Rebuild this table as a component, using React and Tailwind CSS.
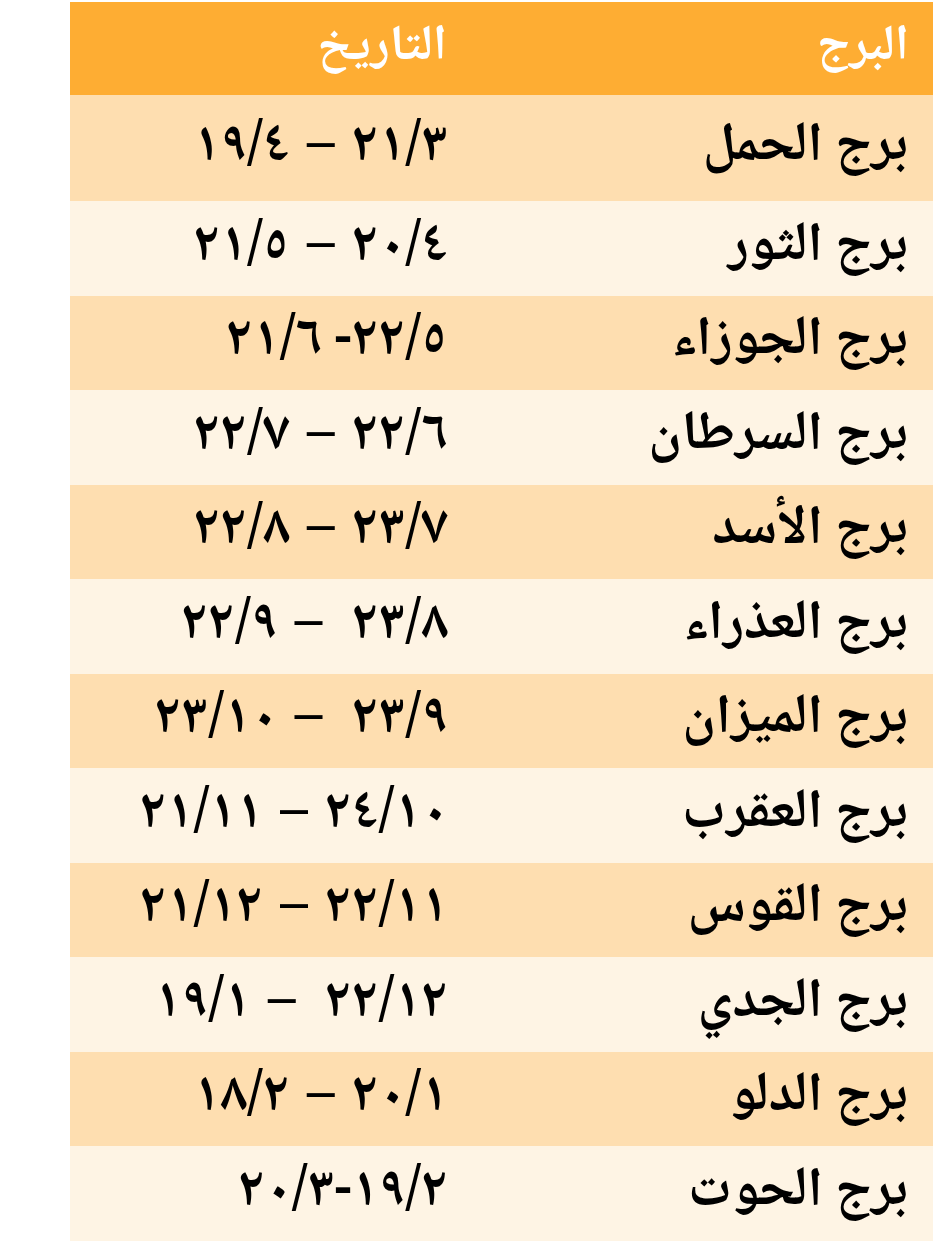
import React from "react";

// [اسم البرج, بداية, فاصل, نهاية]
const rows = [
  ["برج الحمل", "٢١/٣", " – ", "١٩/٤"],
  ["برج الثور", "٢٠/٤", " – ", "٢١/٥"],
  ["برج الجوزاء", "٢٢/٥", "- ", "٢١/٦"],
  ["برج السرطان", "٢٢/٦", " – ", "٢٢/٧"],
  ["برج الأسد", "٢٣/٧", " – ", "٢٢/٨"],
  ["برج العذراء", "٢٣/٨", "  – ", "٢٢/٩"],
  ["برج الميزان", "٢٣/٩", "  – ", "٢٣/١٠"],
  ["برج العقرب", "٢٤/١٠", " – ", "٢١/١١"],
  ["برج القوس", "٢٢/١١", " – ", "٢١/١٢"],
  ["برج الجدي", "٢٢/١٢", "  – ", "١٩/١"],
  ["برج الدلو", "٢٠/١", " – ", "١٨/٢"],
  ["برج الحوت", "١٩/٢", "-", "٢٠/٣"],
];

function App() {
  return (
    <div className="w-[933px] h-[1242px] bg-white pt-[2px] pl-[70px] overflow-hidden">
      <div
        dir="rtl"
        className="w-[863px] font-bold leading-none whitespace-pre"
        style={{ fontFamily: '"Noto Naskh Arabic", "Noto Sans Arabic", "DejaVu Sans", sans-serif' }}
      >
        {/* header */}
        <div className="flex h-[93px] items-center bg-[#fead33] text-white text-[50px]">
          <div className="w-[463px] pr-[24px]">البرج</div>
          <div className="flex-1 pr-[23px]">التاريخ</div>
        </div>

        {rows.map(([name, from, sep, to], i) => (
          <div
            key={name}
            className={
              "flex items-center text-black text-[55px] " +
              (i === 0 ? "h-[106px] " : "h-[94.5px] ") +
              (i % 2 === 0 ? "bg-[#fedeb0]" : "bg-[#fef4e4]")
            }
          >
            <div className="w-[463px] pr-[25px]">{name}</div>
            <div className="flex-1 pr-[22px]">
              {from}
              <span className={sep.includes("–") ? "mx-[5px]" : ""}>{sep}</span>
              {to}
            </div>
          </div>
        ))}
      </div>
    </div>
  );
}

export default App;
